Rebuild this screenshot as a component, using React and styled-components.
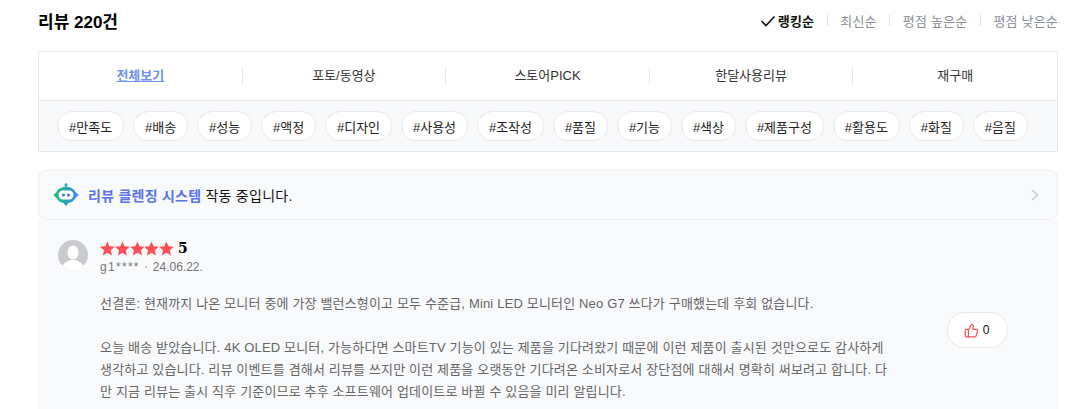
import React from "react"
import styled, { createGlobalStyle } from "styled-components"

const GlobalStyle = createGlobalStyle`
  html, body {
    margin: 0;
    padding: 0;
    background: #fff;
    overflow: hidden;
  }
  body {
    font-family: "Liberation Sans", "Noto Sans CJK KR", sans-serif;
    color: #111;
  }
`

const Page = styled.div`
  width: 1020px;
  height: 409px;
  margin-left: 38px;
  overflow: hidden;
`

const Header = styled.div`
  height: 51px;
  display: flex;
  align-items: center;
  justify-content: space-between;
  padding-bottom: 10px;
  box-sizing: border-box;
`

const Title = styled.h2`
  margin: 0;
  font-size: 17px;
  font-weight: 700;
  color: #000;
`

const SortList = styled.div`
  display: flex;
  align-items: center;
  font-size: 13px;
  letter-spacing: 0.2px;
`

const SortItem = styled.span`
  display: flex;
  align-items: center;
  color: ${(p) => (p.$active ? "#111" : "#8a8f96")};
  font-weight: ${(p) => (p.$active ? 700 : 400)};
  &:not(:first-child)::before {
    content: "";
    width: 1px;
    height: 11px;
    background: #dcdfe3;
    margin: 0 12.5px;
  }
  svg {
    margin-right: 2px;
  }
`

const FilterBox = styled.div`
  border: 1px solid #e5e7ea;
`

const Tabs = styled.div`
  display: grid;
  grid-template-columns: repeat(5, 1fr);
  align-items: center;
  height: 48px;
  border-bottom: 1px solid #e5e7ea;
`

const Tab = styled.div`
  text-align: center;
  font-size: 13px;
  line-height: 16px;
  color: ${(p) => (p.$active ? "#6f94e8" : "#333")};
  font-weight: ${(p) => (p.$active ? 700 : 400)};
  border-right: ${(p) => (p.$last ? "none" : "1px solid #e5e7ea")};
  text-decoration: ${(p) => (p.$active ? "underline" : "none")};
`

const TagRow = styled.div`
  display: flex;
  align-items: center;
  gap: 8.85px;
  height: 50px;
  padding-left: 18px;
  background: #f7f8fa;
`

const Tag = styled.span`
  display: flex;
  align-items: center;
  height: 30px;
  padding: 0 11px;
  box-sizing: border-box;
  background: #fff;
  border: 1px solid #e8e9ec;
  border-radius: 15px;
  font-size: 13px;
  color: #222;
  white-space: nowrap;
`

const Banner = styled.div`
  margin-top: 18px;
  height: 50px;
  box-sizing: border-box;
  display: flex;
  align-items: center;
  padding: 0 17px 0 14px;
  background: #f8f9fb;
  border: 1px solid #eceef1;
  border-radius: 8px;
  font-size: 14px;
  letter-spacing: 0.25px;
  color: #111;
`

const BannerText = styled.span`
  flex: 1;
  margin-left: 9px;
`

const BannerStrong = styled.b`
  color: #5b73e8;
`

const Review = styled.div`
  display: flex;
  background: #f8f9fb;
  padding: 20px 50px 0 20px;
  height: 190px;
  box-sizing: border-box;
`

const Avatar = styled.svg`
  width: 30px;
  height: 30px;
  flex: none;
`

const Body = styled.div`
  margin-left: 12px;
  flex: 1;
`

const RatingRow = styled.div`
  display: flex;
  align-items: center;
  gap: 4px;
  height: 16px;
`

const Stars = styled.div`
  display: flex;
  width: 74px;
`

const Score = styled.span`
  font-family: "DejaVu Serif", serif;
  font-weight: 700;
  font-size: 14px;
  color: #000;
`

const Meta = styled.div`
  display: flex;
  align-items: center;
  margin-top: 4px;
  font-size: 12px;
  line-height: 14px;
  color: #777;
`

const Author = styled.span`
  letter-spacing: 1.3px;
`

const Dot = styled.span`
  width: 2px;
  height: 2px;
  margin: 0 6px 0 5px;
  background: #bbb;
  border-radius: 50%;
`

const Content = styled.div`
  display: flex;
  justify-content: space-between;
  margin-top: 19px;
`

const Paragraphs = styled.div`
  width: 795px;
  font-size: 13px;
  letter-spacing: 0.165px;
  line-height: 22px;
  color: #666;
`

const Spacer = styled.div`
  height: 22px;
`

const LikeButton = styled.div`
  display: flex;
  align-items: center;
  justify-content: center;
  gap: 4px;
  width: 61px;
  height: 36px;
  margin-top: 19px;
  padding-right: 2px;
  background: #fff;
  border: 1px solid #e8e9ec;
  border-radius: 18px;
  box-sizing: border-box;
  font-size: 12px;
  color: #111;
`

const Star = () => (
  <svg width="15" height="15" viewBox="0.5 1 23 22" fill="#fb4f55">
    <path d="M12 1l3.300 7.600 8.200.8-6.200 5.500 1.800 8.100L12 18.800 4.900 23l1.800-8.100L.5 9.400l8.200-.8z" />
  </svg>
)

const RobotIcon = () => (
  <svg width="26" height="24" viewBox="0 0 26 24" style={{ flex: "none" }}>
    <defs>
      <linearGradient id="bot" x1="0" y1="0.5" x2="1" y2="0.5">
        <stop offset="0" stopColor="#1dbb74" />
        <stop offset="0.5" stopColor="#2aa8b4" />
        <stop offset="1" stopColor="#3d86f2" />
      </linearGradient>
    </defs>
    <circle cx="13" cy="1.800" r="1.500" fill="#2aa8b4" />
    <rect x="12.400" y="2" width="1.200" height="3" fill="#2aa8b4" />
    <path d="M.5 12l3-3C5 6 8.500 3.800 13 3.800S21 6 22.500 9l3 3-3 3c-1.500 3-4.500 4.500-7 5L13 23l-2.500-3c-2.500-.5-5.500-2-7-5z" fill="url(#bot)" />
    <rect x="5.500" y="7.500" width="15" height="9" rx="4.500" fill="#fff" />
    <circle cx="10.500" cy="12" r="1.600" fill="#3f7fe8" />
    <circle cx="15.500" cy="12" r="1.600" fill="#3f7fe8" />
  </svg>
)

const tabs = ["전체보기", "포토/동영상", "스토어PICK", "한달사용리뷰", "재구매"]
const tags = ["만족도", "배송", "성능", "액정", "디자인", "사용성", "조작성", "품질", "기능", "색상", "제품구성", "활용도", "화질", "음질"]

export default function App() {
  return (
    <Page>
      <GlobalStyle />
      <Header>
        <Title>리뷰 220건</Title>
        <SortList>
          <SortItem $active>
            <svg width="16" height="12" viewBox="0 0 16 12" fill="none" stroke="#111" strokeWidth="1.600">
              <path d="M1.500 6l4.500 4.500L14.500 1.500" />
            </svg>
            랭킹순
          </SortItem>
          <SortItem>최신순</SortItem>
          <SortItem>평점 높은순</SortItem>
          <SortItem>평점 낮은순</SortItem>
        </SortList>
      </Header>

      <FilterBox>
        <Tabs>
          {tabs.map((t, i) => (
            <Tab key={t} $active={i === 0} $last={i === tabs.length - 1}>{t}</Tab>
          ))}
        </Tabs>
        <TagRow>
          {tags.map((t) => (
            <Tag key={t}>#{t}</Tag>
          ))}
        </TagRow>
      </FilterBox>

      <Banner>
        <RobotIcon />
        <BannerText><BannerStrong>리뷰 클렌징 시스템</BannerStrong> 작동 중입니다.</BannerText>
        <svg width="10" height="14" viewBox="0 0 10 14" fill="none" stroke="#c9ccd1" strokeWidth="1.500">
          <path d="M2 2l5.500 5L2 12" />
        </svg>
      </Banner>

      <Review>
        <Avatar viewBox="0 0 30 30">
          <circle cx="15" cy="15" r="15" fill="#c9cbcf" />
          <ellipse cx="15" cy="12.500" rx="5.500" ry="7" fill="#fff" />
          <path d="M4.500 26c2-4 6-5 8-6h5c2 1 6 2 8 6a15 15 0 0 1-21 0z" fill="#fff" />
        </Avatar>
        <Body>
          <RatingRow>
            <Stars>
              {[0, 1, 2, 3, 4].map((i) => <Star key={i} />)}
            </Stars>
            <Score>5</Score>
          </RatingRow>
          <Meta>
            <Author>g1****</Author><Dot />24.06.22.
          </Meta>
          <Content>
            <Paragraphs>
              선결론: 현재까지 나온 모니터 중에 가장 밸런스형이고 모두 수준급, Mini LED 모니터인 Neo G7 쓰다가 구매했는데 후회 없습니다.
              <Spacer />
              오늘 배송 받았습니다. 4K OLED 모니터, 가능하다면 스마트TV 기능이 있는 제품을 기다려왔기 때문에 이런 제품이 출시된 것만으로도 감사하게 생각하고 있습니다. 리뷰 이벤트를 겸해서 리뷰를 쓰지만 이런 제품을 오랫동안 기다려온 소비자로서 장단점에 대해서 명확히 써보려고 합니다. 다만 지금 리뷰는 출시 직후 기준이므로 추후 소프트웨어 업데이트로 바뀔 수 있음을 미리 알립니다.
            </Paragraphs>
            <LikeButton>
              <svg width="15" height="15" viewBox="0 0 24 24" fill="none" stroke="#f5525a" strokeWidth="2" strokeLinejoin="round" strokeLinecap="round">
                <path d="M7 10v12" />
                <path d="M15 5.880 14 10h5.830a2 2 0 0 1 1.920 2.560l-2.330 8A2 2 0 0 1 17.500 22H4a2 2 0 0 1-2-2v-8a2 2 0 0 1 2-2h2.760a2 2 0 0 0 1.790-1.110L12 2a3.130 3.130 0 0 1 3 3.880Z" />
              </svg>
              0
            </LikeButton>
          </Content>
        </Body>
      </Review>
    </Page>
  )
}
